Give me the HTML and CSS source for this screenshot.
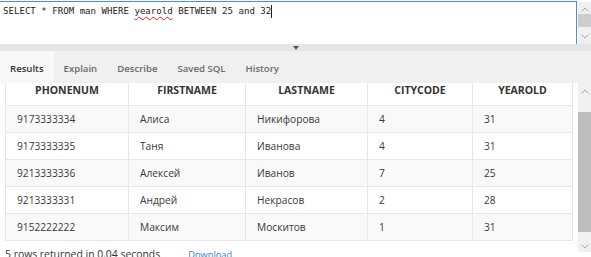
FILE: index.html
```html
<!DOCTYPE html>
<html>
<head>
<meta charset="utf-8">
<link rel="stylesheet" href="styles.css">
</head>
<body>
<div class="editor">
  <div class="sql">SELECT * FROM man WHERE <span class="typo">yearold</span> BETWEEN 25 and 32<span class="caret"></span></div>
  <div class="vscroll top-scroll">
    <svg class="arrow" width="8" height="5" viewBox="0 0 8 5"><polyline points="0.5,4.5 4,1 7.5,4.5" fill="none" stroke="#a8a8a8" stroke-width="1"/></svg>
    <div class="thumb"></div>
    <svg class="arrow" width="8" height="5" viewBox="0 0 8 5"><polyline points="0.5,0.5 4,4 7.5,0.5" fill="none" stroke="#a8a8a8" stroke-width="1"/></svg>
  </div>
</div>
<div class="splitter"><span class="tri"></span></div>
<div class="tabs">
  <div class="tab active">Results</div>
  <div class="tab">Explain</div>
  <div class="tab">Describe</div>
  <div class="tab">Saved SQL</div>
  <div class="tab">History</div>
</div>
<div class="results">
  <div class="grid-wrap">
    <table class="grid">
      <thead>
        <tr><th class="c1">PHONENUM</th><th class="c2">FIRSTNAME</th><th class="c3">LASTNAME</th><th class="c4">CITYCODE</th><th class="c5">YEAROLD</th></tr>
      </thead>
      <tbody>
        <tr class="odd"><td>9173333334</td><td>Алиса</td><td>Никифорова</td><td>4</td><td>31</td></tr>
        <tr><td>9173333335</td><td>Таня</td><td>Иванова</td><td>4</td><td>31</td></tr>
        <tr class="odd"><td>9213333336</td><td>Алексей</td><td>Иванов</td><td>7</td><td>25</td></tr>
        <tr><td>9213333331</td><td>Андрей</td><td>Некрасов</td><td>2</td><td>28</td></tr>
        <tr class="odd"><td>9152222222</td><td>Максим</td><td>Москитов</td><td>1</td><td>31</td></tr>
      </tbody>
    </table>
    <div class="footer"><span class="count">5 rows returned in 0.04 seconds</span><a class="download">Download</a></div>
  </div>
  <div class="vscroll big-scroll">
    <svg class="arrow" width="8" height="5" viewBox="0 0 8 5"><polyline points="0.5,4.5 4,1 7.5,4.5" fill="none" stroke="#a8a8a8" stroke-width="1"/></svg>
    <div class="thumb"></div>
    <svg class="arrow" width="8" height="5" viewBox="0 0 8 5"><polyline points="0.5,0.5 4,4 7.5,0.5" fill="none" stroke="#a8a8a8" stroke-width="1"/></svg>
  </div>
</div>
</body>
</html>
```
FILE: styles.css
```css
html, body {
  margin: 0;
  padding: 0;
}
body {
  width: 591px;
  height: 257px;
  overflow: hidden;
  background: #ffffff;
  font-family: "Open Sans", "Noto Sans", sans-serif;
  color: #333333;
}
.editor {
  display: flex;
  height: 44px;
  padding-top: 1px;
  box-sizing: border-box;
  background: #ffffff;
}
.sql {
  flex: 1;
  border-top: 1px solid #4a90d9;
  border-right: 1px solid #4a90d9;
  padding: 3px 0 0 3px;
  font-family: "DejaVu Sans Mono", "Liberation Mono", monospace;
  font-size: 9.1px;
  line-height: 13px;
  color: #222222;
  white-space: pre;
}
.typo {
  text-decoration: underline wavy #e02020;
  text-decoration-thickness: 1px;
  text-underline-offset: 2px;
  text-decoration-skip-ink: none;
}
.caret {
  display: inline-block;
  width: 0;
  height: 13px;
  border-left: 1px solid #222;
  vertical-align: top;
}
.vscroll {
  background: #f0f0f0;
  width: 13px;
  display: flex;
  flex-direction: column;
  align-items: center;
  box-sizing: border-box;
}
.top-scroll {
  margin-left: 1px;
  margin-top: 1px;
  padding-top: 5px;
}
.top-scroll .thumb {
  width: 13px;
  height: 13px;
  background: #cdcdcd;
  margin-top: 2px;
  margin-bottom: 7px;
}
.splitter {
  height: 7px;
  background: #e5e5e5;
  display: flex;
  justify-content: center;
  align-items: center;
}
.tri {
  width: 0;
  height: 0;
  border-left: 3px solid transparent;
  border-right: 3px solid transparent;
  border-top: 4px solid #555555;
  margin-left: 1px;
}
.tabs {
  display: flex;
  height: 32px;
  background: #f0f0f0;
}
.tab {
  padding: 0 10px;
  font-size: 9.6px;
  font-weight: 600;
  color: #6a6a6a;
  line-height: 35px;
}
.tab.active {
  background: #f8f8f8;
  color: #333333;
}
.results {
  display: flex;
  height: 174px;
}
.grid-wrap {
  width: 577px;
  padding-left: 5px;
  box-sizing: border-box;
  overflow: hidden;
}
.grid {
  border-collapse: collapse;
  table-layout: fixed;
  width: 567px;
  font-size: 10.2px;
}
.grid th {
  height: 22px;
  padding: 0 0 8px 0;
  font-size: 10.5px;
  font-weight: 700;
  color: #333333;
  text-align: center;
  line-height: 14px;
  border: 1px solid #e6e6e6;
  border-top: none;
  box-sizing: border-box;
  background: #ffffff;
}
.grid .c1 { width: 123px; }
.grid .c2 { width: 117px; }
.grid .c3 { width: 122px; }
.grid .c4 { width: 105px; }
.grid .c5 { width: 100px; }
.grid td {
  height: 27px;
  padding: 0 0 0 11px;
  border: 1px solid #e6e6e6;
  box-sizing: border-box;
  color: #3a3a3a;
  background: #ffffff;
}
.grid tr.odd td {
  background: #f9f9f9;
}
.footer {
  margin-top: 6px;
  display: flex;
  align-items: baseline;
  white-space: nowrap;
}
.count {
  font-size: 10.4px;
  color: #333333;
}
.download {
  margin-left: 28px;
  font-size: 9.3px;
  color: #3a80d8;
}
.big-scroll {
  margin-left: 1px;
  height: 169px;
  padding-top: 6px;
}
.big-scroll .thumb {
  width: 13px;
  height: 120px;
  background: #bdbdbd;
  margin-top: 18px;
  margin-bottom: 12px;
}
```
